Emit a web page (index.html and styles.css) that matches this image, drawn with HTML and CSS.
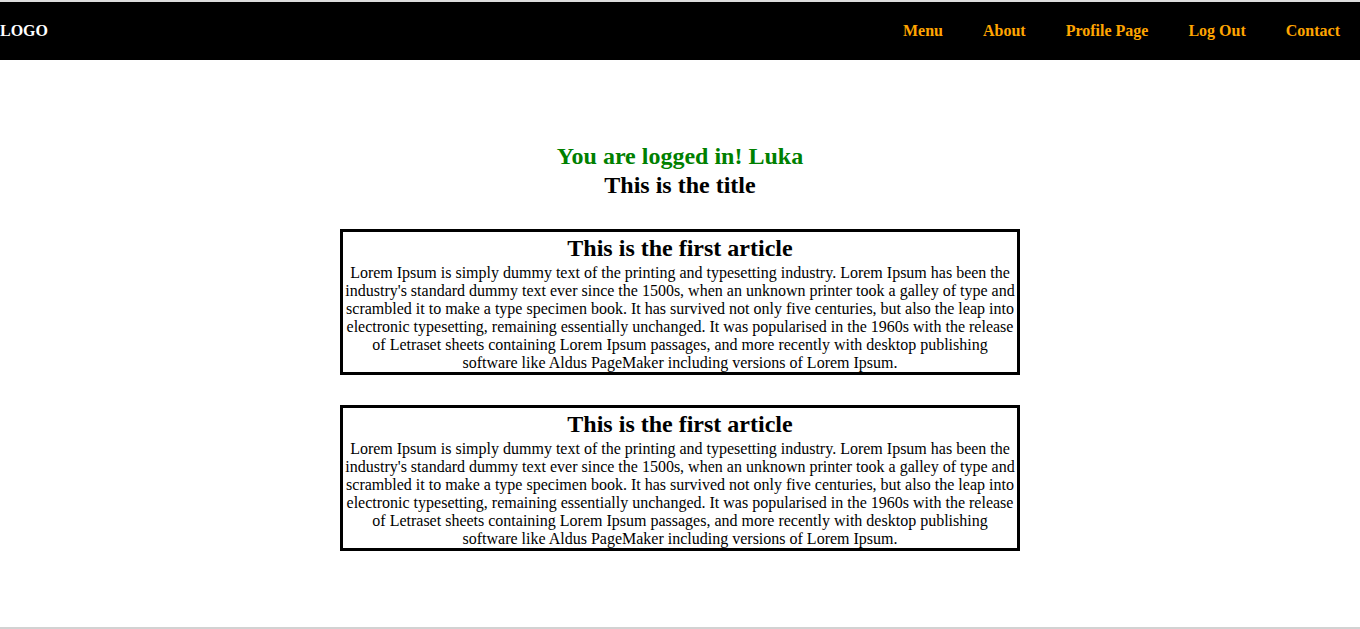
FILE: index.html
```html
<!DOCTYPE html>
<html>
<head>
<meta charset="utf-8">
<title>Page</title>
<link rel="stylesheet" href="styles.css">
</head>
<body>
<div class="page">
  <header class="nav">
    <div class="logo">LOGO</div>
    <nav class="links">
      <a href="#">Menu</a>
      <a href="#">About</a>
      <a href="#">Profile Page</a>
      <a href="#">Log Out</a>
      <a href="#">Contact</a>
    </nav>
  </header>
  <main class="main">
    <h2 class="logged">You are logged in! Luka</h2>
    <h2 class="title">This is the title</h2>
    <article class="article">
      <h2 class="article-title">This is the first article</h2>
      <p class="article-text">Lorem Ipsum is simply dummy text of the printing and typesetting industry. Lorem Ipsum has been the industry's standard dummy text ever since the 1500s, when an unknown printer took a galley of type and scrambled it to make a type specimen book. It has survived not only five centuries, but also the leap into electronic typesetting, remaining essentially unchanged. It was popularised in the 1960s with the release of Letraset sheets containing Lorem Ipsum passages, and more recently with desktop publishing software like Aldus PageMaker including versions of Lorem Ipsum.</p>
    </article>
    <article class="article">
      <h2 class="article-title">This is the first article</h2>
      <p class="article-text">Lorem Ipsum is simply dummy text of the printing and typesetting industry. Lorem Ipsum has been the industry's standard dummy text ever since the 1500s, when an unknown printer took a galley of type and scrambled it to make a type specimen book. It has survived not only five centuries, but also the leap into electronic typesetting, remaining essentially unchanged. It was popularised in the 1960s with the release of Letraset sheets containing Lorem Ipsum passages, and more recently with desktop publishing software like Aldus PageMaker including versions of Lorem Ipsum.</p>
    </article>
  </main>
  <div class="bottom-strip"></div>
</div>
</body>
</html>
```

FILE: styles.css
```css
html, body {
  margin: 0;
  padding: 0;
  background: #ffffff;
}

body {
  font-family: "Liberation Serif", "Times New Roman", serif;
  font-size: 16px;
  color: #000;
}

.page {
  min-height: 100vh;
  display: flex;
  flex-direction: column;
  border-top: 2px solid #dcdcdc;
  box-sizing: border-box;
}

.nav {
  background: #000;
  height: 58px;
  display: flex;
  align-items: center;
  justify-content: space-between;
}

.logo {
  color: #fff;
  font-weight: bold;
  font-size: 16px;
}

.links {
  display: flex;
  gap: 40px;
  padding-right: 20px;
}

.links a {
  color: orange;
  font-weight: bold;
  font-size: 16px;
  text-decoration: none;
}

.main {
  flex: 1;
  display: flex;
  flex-direction: column;
  align-items: center;
  padding-top: 82px;
}

.logged,
.title {
  margin: 0;
  font-size: 24px;
  line-height: 29px;
  font-weight: bold;
  text-align: center;
}

.logged {
  color: green;
}

.title {
  margin-bottom: 29px;
}

.article {
  width: 680px;
  box-sizing: border-box;
  border: 3px solid #000;
  text-align: center;
  margin-bottom: 30px;
}

.article-title {
  margin: 0;
  font-size: 24px;
  font-weight: bold;
  line-height: 32px;
}

.article-text {
  margin: 0;
  font-size: 16px;
  line-height: 18px;
}

.bottom-strip {
  height: 2px;
  background: #d2d2d2;
}
```
